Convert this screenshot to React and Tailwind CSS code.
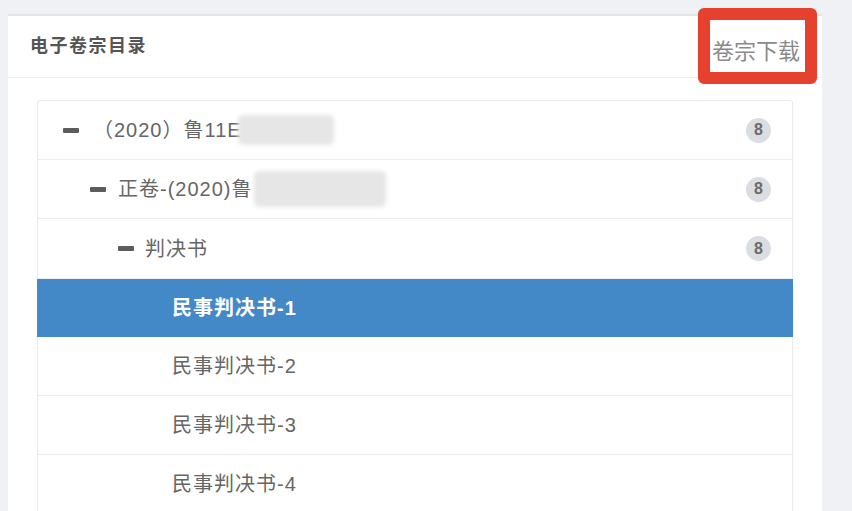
import React from "react";

const font = { fontFamily: '"Liberation Sans", "Noto Sans CJK SC", sans-serif' };

function Dash() {
  return <span className="inline-block w-[16px] h-[5px] rounded-[1px] bg-[#5c5c5c] shrink-0" />;
}

function Badge() {
  return (
    <span className="flex items-center justify-center w-[25px] h-[25px] rounded-full bg-[#dadde1] text-[#6b6b6b] text-[16px] font-bold tracking-normal">
      8
    </span>
  );
}

function Blur({ w, h, ml }) {
  return <span className={`inline-block rounded-[5px] bg-[#e6e6e6] blur-[2px] ${w} ${h} ${ml}`} />;
}

export default function App() {
  return (
    <div className="w-[852px] h-[511px] overflow-hidden bg-[#f0f1f4] pt-[14px] pl-[8px] pr-[30px] relative" style={font}>
      <div className="bg-white border-t-2 border-[#e4e6ea] h-full">
        <div className="h-[62px] border-b border-[#eceef1] flex items-center justify-between pl-[22px] pr-[22px]">
          <span className="text-[18px] font-bold tracking-[1.5px] text-[#555]">电子卷宗目录</span>
          <span className="text-[22px] text-[#8a8a8a] pt-[10px]">卷宗下载</span>
        </div>
        <div className="mt-[22px] mx-[29px] border border-[#e9eaec] rounded-[3px] text-[20px] tracking-[1px] text-[#666]">
          <div className="h-[59px] border-b border-[#ececee] flex items-center pl-[25px] pr-[21px]">
            <Dash />
            <span className="ml-[14px] flex items-center">
              （2020）鲁11E
              <Blur w="w-[96px]" h="h-[30px]" ml="-ml-[4px]" />
            </span>
            <span className="ml-auto"><Badge /></span>
          </div>
          <div className="h-[59px] border-b border-[#ececee] flex items-center pl-[52px] pr-[21px]">
            <Dash />
            <span className="ml-[12px] flex items-center">
              正卷-(2020)鲁
              <Blur w="w-[132px]" h="h-[36px]" ml="ml-[2px]" />
            </span>
            <span className="ml-auto"><Badge /></span>
          </div>
          <div className="h-[60px] border-b border-[#ececee] flex items-center pl-[80px] pr-[21px]">
            <Dash />
            <span className="ml-[11px]">判决书</span>
            <span className="ml-auto"><Badge /></span>
          </div>
          <div className="h-[58px] bg-[#4389c8] -mx-px flex items-center pl-[135px] text-white font-semibold">
            民事判决书-1
          </div>
          <div className="h-[59px] border-b border-[#ececee] flex items-center pl-[134px]">民事判决书-2</div>
          <div className="h-[59px] border-b border-[#ececee] flex items-center pl-[134px]">民事判决书-3</div>
          <div className="h-[59px] border-b border-[#ececee] flex items-center pl-[134px]">民事判决书-4</div>
        </div>
      </div>
      <div className="absolute left-[698px] top-[8px] w-[119px] h-[76px] border-[12px] border-[#e6402e] rounded-[6px] pointer-events-none" />
    </div>
  );
}
